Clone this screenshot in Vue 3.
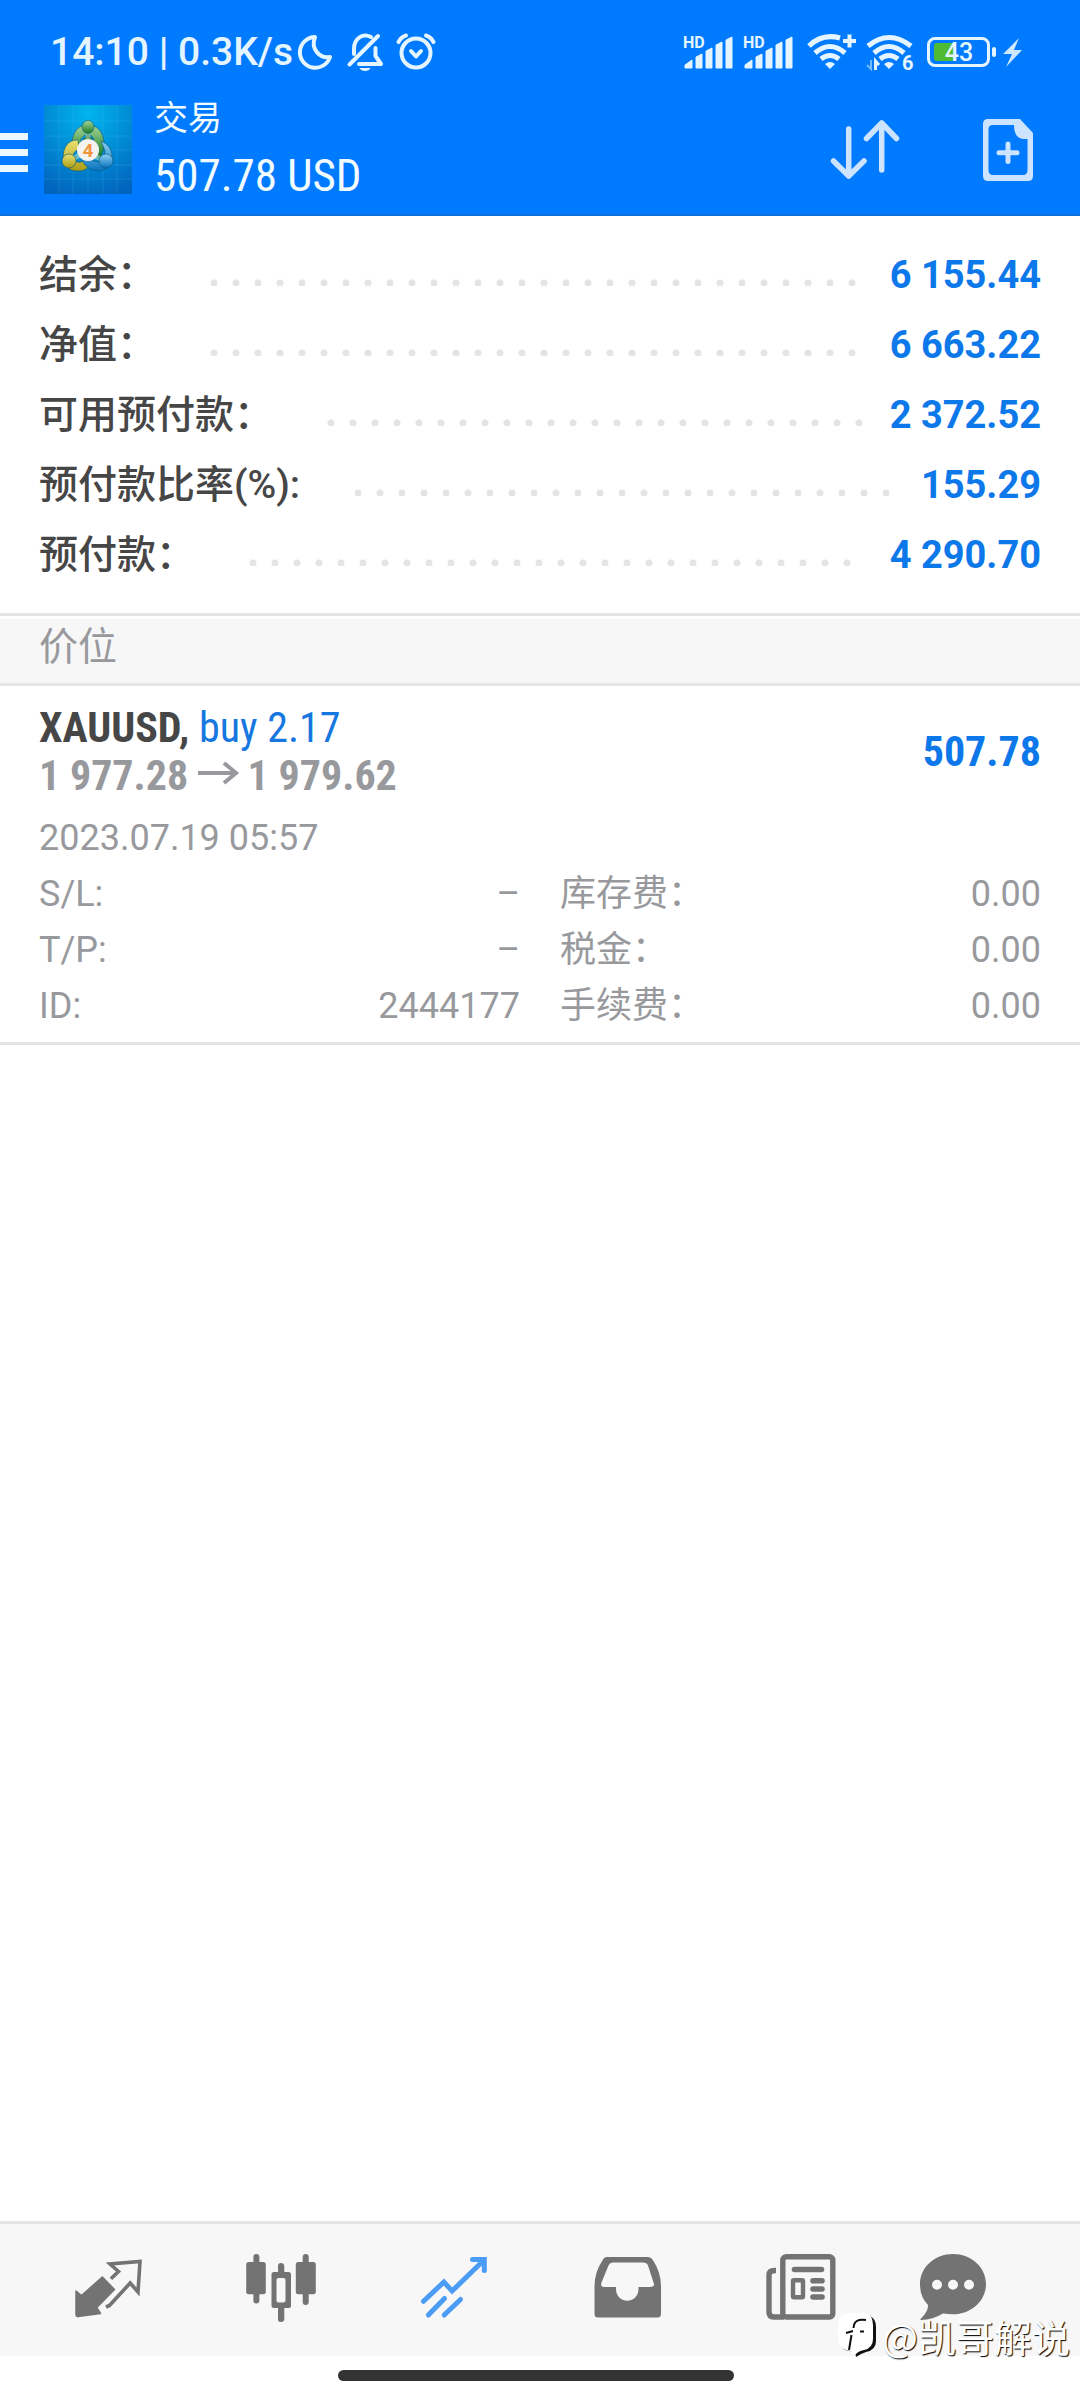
<script setup>
const account = [
  { label: '结余：', value: '6 155.44' },
  { label: '净值：', value: '6 663.22' },
  { label: '可用预付款：', value: '2 372.52' },
  { label: '预付款比率(%):', value: '155.29' },
  { label: '预付款：', value: '4 290.70' },
]

const details = [
  { label: 'S/L:', value: '–' },
  { label: '库存费：', value: '0.00' },
  { label: 'T/P:', value: '–' },
  { label: '税金：', value: '0.00' },
  { label: 'ID:', value: '2444177' },
  { label: '手续费：', value: '0.00' },
]
</script>

<template>
  <div class="screen">
    <header class="header">
      <div class="status">
        <span class="clock">14:10 | 0.3K/s</span>
        <svg class="moon" width="38" height="40" viewBox="0 0 38 40" fill="none" stroke="currentColor" stroke-width="4" stroke-linejoin="round">
          <path d="M19 5A15.400 15.400 0 1 0 34 25C25 27 14 18 19 5Z" />
        </svg>
        <svg class="bell" width="40" height="40" viewBox="0 0 40 40" fill="none" stroke="currentColor" stroke-width="4" stroke-linecap="round">
          <path d="M4.500 32.500 33 4M9 22V17C9 6 18 1 26 5" />
          <path d="M30.500 16V24L36 32H14" stroke-linejoin="round" />
          <path d="M14.500 36H25.500C24 40 16 40 14.500 36Z" fill="currentColor" stroke="none" />
        </svg>
        <svg class="alarm" width="42" height="40" viewBox="0 0 42 40" fill="none" stroke="currentColor" stroke-width="4" stroke-linecap="round" stroke-linejoin="round">
          <circle cx="21" cy="21" r="14.500" />
          <path d="M16 19 21 24.500 26 19M3.500 10Q6 5 11 3.500M38.500 10Q36 5 31 3.500" />
        </svg>
        <span class="spacer"></span>
        <svg v-for="n in 2" :key="n" class="signal" width="52" height="40" viewBox="0 0 52 40" fill="currentColor">
          <text x="0" y="16" class="hd">HD</text>
          <path d="M2 36V33L9 28V36ZM13 36V25L19 22V36ZM23 36V19L29 16V36ZM33 36V13L39 10V36ZM43 36V8L49 5V36Z" stroke="currentColor" stroke-width="1" stroke-linejoin="round" />
        </svg>
        <svg class="wifi" width="52" height="40" viewBox="0 0 52 40" fill="none" stroke="currentColor" stroke-width="5">
          <path d="M2 14Q15 1 33 6M8 21Q23 8 38 21M14 27Q23 20 32 27" />
          <path d="M18 32Q23 28 28 32L23 37Z" fill="currentColor" stroke="none" />
          <path d="M36 9H49M42.500 2.500V15.500" stroke-width="4" />
        </svg>
        <svg class="wifi" width="52" height="40" viewBox="0 0 52 40" fill="none" stroke="currentColor" stroke-width="5">
          <path d="M2 14Q23-3 45 14M8 21Q23 8 38 21M14 27Q23 20 32 27" />
          <path d="M18 32Q23 28 28 32L23 37Z" fill="currentColor" stroke="none" />
          <path d="M5 28V37L1 33" stroke-width="2" opacity=".5" />
          <path d="M9.500 38V29L13 33" stroke-width="3" />
          <text x="36" y="38" class="six">6</text>
        </svg>
        <svg class="battery" width="98" height="40" viewBox="0 0 98 40" fill="none">
          <rect x="1.500" y="6.500" width="60" height="27" rx="6.500" stroke="currentColor" stroke-width="3" />
          <path d="M10 11H27V29H10Q7 29 7 26V14Q7 11 10 11Z" fill="#4fbb32" />
          <rect x="65" y="15" width="4" height="10" rx="2" fill="currentColor" />
          <path d="M92 6 76 22H85L79 35 95 18H87Z" fill="#cfe8ff" />
          <text x="32" y="29" text-anchor="middle" class="charge">43</text>
        </svg>
      </div>

      <div class="appbar">
        <button class="menu" aria-label="菜单"><i></i><i></i><i></i></button>
        <svg class="logo" width="88" height="89" viewBox="0 0 88 89">
          <defs>
            <radialGradient id="sky" cx=".5" cy=".1" r=".95">
              <stop offset="0" stop-color="#00b4ee" /><stop offset="1" stop-color="#0164bd" />
            </radialGradient>
            <linearGradient id="green" x2="0" y2="1"><stop stop-color="#a8d89a" /><stop offset="1" stop-color="#177a25" /></linearGradient>
            <linearGradient id="yellow" x2="0" y2="1"><stop stop-color="#e9e173" /><stop offset="1" stop-color="#aa9c13" /></linearGradient>
            <linearGradient id="blue" x2="0" y2="1"><stop stop-color="#8dd1f4" /><stop offset="1" stop-color="#0872bc" /></linearGradient>
          </defs>
          <rect width="88" height="89" fill="url(#sky)" />
          <path d="M15 0V89M29 0V89M44 0V89M59 0V89M73 0V89M0 16H88M0 31H88M0 45H88M0 60H88M0 74H88" stroke="#56c3f2" stroke-opacity=".2" />
          <g stroke="#075676" stroke-opacity=".6">
            <path d="M28 42C26 12 61 13 60 40Q60 47 56 52L47 50 50 34Q44 24 37 34L36 42Z" fill="url(#green)" />
            <path d="M34 35C15 34 14 66 33 66Q44 67 48 56L42 52Q38 60 31 56 26 48 35 44Z" fill="url(#yellow)" />
            <path d="M57 36C74 43 70 65 54 66Q42 65 38 55L46 53Q52 60 60 54L61 46Z" fill="url(#blue)" />
            <path d="M38 36 44 29 50 36V50H38Z" fill="#1d6b34" />
            <path d="M25 56 36 50M62 56 50 51M44 23V34" stroke="#bfe3b4" stroke-width="5" stroke-opacity=".55" />
            <ellipse cx="44" cy="22" rx="6" ry="6.500" fill="url(#green)" />
            <circle cx="25" cy="56" r="7" fill="url(#yellow)" />
            <circle cx="62" cy="56" r="7" fill="url(#blue)" />
          </g>
          <circle cx="44" cy="45" r="11" fill="#f5f3f2" />
          <text x="44" y="52" text-anchor="middle" class="four">4</text>
        </svg>
        <div class="titles">
          <h1>交易</h1>
          <p class="amount">507.78 USD</p>
        </div>
        <button class="tool sort" aria-label="排序">
          <svg width="70" height="62" viewBox="0 0 70 62" fill="none" stroke="currentColor" stroke-width="5.500" stroke-linecap="round" stroke-linejoin="round">
            <path d="M18.700 10V57M3.500 42 18.700 57 34 42M51.700 51V4M36.500 19.500 51.700 4 66.500 19.500" />
          </svg>
        </button>
        <button class="tool" aria-label="新订单">
          <svg width="50" height="62" viewBox="0 0 50 62" fill="currentColor">
            <path fill-rule="evenodd" d="M5 0H37L50 14V57Q50 62 45 62H5Q0 62 0 57V5Q0 0 5 0ZM10 6Q5.500 6 5.500 10V51Q5.500 56 10 56H40Q44.500 56 44.500 51V20H40Q31 19 31 6Z" />
            <path d="M25 25V42.500M16 33.700H34" stroke="currentColor" stroke-width="5" stroke-linecap="round" />
          </svg>
        </button>
      </div>
    </header>

    <main>
      <dl class="account">
        <div v-for="row in account" :key="row.label" class="row">
          <dt>{{ row.label }}</dt>
          <span class="dots"></span>
          <dd>{{ row.value }}</dd>
        </div>
      </dl>

      <h2 class="section"><span>价位</span></h2>

      <article class="position">
        <div class="summary">
          <div>
            <p class="deal"><strong>XAUUSD,</strong> <span class="buy">buy 2.17</span></p>
            <p class="prices">
              1 977.28
              <svg class="arrow" width="40" height="22" viewBox="0 0 40 22" fill="none" stroke="currentColor" stroke-width="4"><path d="M0 11H38M26 1 38 11 26 21" /></svg>
              1 979.62
            </p>
          </div>
          <strong class="profit">507.78</strong>
        </div>
        <p class="date">2023.07.19 05:57</p>
        <dl class="details">
          <div v-for="item in details" :key="item.label">
            <dt>{{ item.label }}</dt>
            <dd>{{ item.value }}</dd>
          </div>
        </dl>
      </article>
    </main>

    <footer>
      <nav class="tabs">
        <a href="#quotes" aria-label="行情">
          <svg width="72" height="72" viewBox="0 0 72 72" fill="currentColor">
            <path d="M4 37 9.500 41.500 30.300 23 42.500 35.500 24.800 53.500 28.500 59.500 6 62.500Q4 63 4 60Z" stroke="currentColor" stroke-width="1.500" stroke-linejoin="round" />
            <path d="M38.900 24.700 46.500 17.500 38 10 68 7.500 66 38 58.200 29 37.500 51.500 34 53" fill="none" stroke="currentColor" stroke-width="3.600" />
          </svg>
        </a>
        <a href="#charts" aria-label="图表">
          <svg width="72" height="72" viewBox="0 0 72 72" fill="currentColor">
            <rect x="8.400" y="0" width="6" height="49.500" rx="3" /><rect x="1.200" y="8" width="19.600" height="32.300" rx="2.500" />
            <rect x="57.700" y="0" width="6" height="51" rx="3" /><rect x="50.800" y="8" width="20" height="32.300" rx="2.500" />
            <path d="M33 18V12Q33 9 36 9T39.300 12V18H43.500Q46 18 46 20.500V51.500Q46 54 43.500 54H39.300V65Q39.300 68 36 68T33 65V54H29Q26.500 54 26.500 51.500V20.500Q26.500 18 29 18ZM33.500 24Q31.500 24 31.500 26V46.500Q31.500 48.500 33.500 48.500H38.500Q40.500 48.500 40.500 46.500V26Q40.500 24 38.500 24Z" fill-rule="evenodd" />
          </svg>
        </a>
        <a href="#trade" class="active" aria-label="交易">
          <svg width="72" height="72" viewBox="0 0 72 72" fill="none" stroke="currentColor" stroke-width="5" stroke-linecap="round">
            <path d="M5.500 47.300 25.900 28 34.100 37 65 7M54.500 5.500H66.300V16.500" />
            <path d="M10.400 61 26.500 44.500M26.200 61 42.500 45.500" />
          </svg>
        </a>
        <a href="#history" aria-label="历史">
          <svg width="72" height="72" viewBox="0 0 72 72" fill="currentColor">
            <path fill-rule="evenodd" d="M15.500 3H57Q60 3 61.500 5.500Q70 18 70 32V60Q70 63.500 66.500 63.500H7Q3.500 63.500 3.500 60V32Q3.500 18 12 5.500Q13 3 15.500 3ZM22 8.500Q19 8.500 17.500 11.500L10.500 28.500Q9 33 13 33H25V35C25 50.500 47.500 50.500 47.500 35V33H59Q64.500 33 62.500 28.500L57 11.500Q56 8.500 52 8.500Z" />
          </svg>
        </a>
        <a href="#news" aria-label="新闻">
          <svg width="72" height="72" viewBox="0 0 72 72" fill="none" stroke="currentColor">
            <rect x="18.800" y="2.700" width="50" height="60.300" rx="3.500" stroke-width="5.400" />
            <path d="M12 16.500H10.500Q5 16.500 5 21V58Q5 63 10 63H20" stroke-width="5.400" />
            <path d="M30.500 15.500H57.500M49 26.800H58M49 35H58M49 43H58" stroke-width="5.600" stroke-linecap="round" />
            <rect x="29" y="26.300" width="10" height="17" rx="1" stroke-width="4.400" />
          </svg>
        </a>
        <a href="#chat" aria-label="聊天">
          <svg width="72" height="72" viewBox="0 0 72 72" fill="currentColor">
            <path fill-rule="evenodd" d="M36 0C54 0 69 13 69 30S54 60.300 36 60.300Q31 60.300 26 59.500Q16 65.500 4 66Q2.500 66 4 64.500Q11.500 57 11 51Q3 43 3 30C3 13 18 0 36 0ZM20 25.700A5 5 0 1 0 20 35.700A5 5 0 1 0 20 25.700ZM36 25.700A5 5 0 1 0 36 35.700A5 5 0 1 0 36 25.700ZM52 25.700A5 5 0 1 0 52 35.700A5 5 0 1 0 52 25.700Z" />
          </svg>
        </a>
      </nav>
      <div class="gesture"><i></i></div>
    </footer>

    <div class="watermark">
      <svg width="40" height="46" viewBox="0 0 40 46">
        <path d="M13 2H27Q38 3 38 14V28Q38 37 28 39Q22 41 18 44L17 39L11 38Q4 37 2 31Z" fill="#111" />
        <path d="M11 0H25Q35 1 35 12V26Q35 35 26 37Q20 38 17 42L12 38Q0 36 0 26V11Q1 1 11 0Z" fill="#fff" />
        <path d="M28 7Q16 5 15.500 15M8 20 15 18M22 18.500H26M13.500 22 11 37" fill="none" stroke="#111" stroke-width="2" />
      </svg>
      <span>@凯哥解说</span>
    </div>
  </div>
</template>

<style>
body {
  margin: 0;
}
</style>

<style scoped>
.screen {
  position: relative;
  display: flex;
  flex-direction: column;
  min-height: 100vh;
  background: #fff;
  color: #98999d;
  font-family: Roboto, "Noto Sans CJK SC", sans-serif;
}

h1, h2, p, dl, dd {
  margin: 0;
}

svg {
  display: block;
  flex: none;
  overflow: visible;
}

button {
  padding: 0;
  border: 0;
  background: none;
  color: inherit;
}

.header {
  background: #007aff;
  color: #e4f5ff;
  border-bottom: 2px solid #0b70d9;
}

.status {
  display: flex;
  align-items: center;
  height: 96px;
  padding: 4px 55px 0 50px;
}

.clock {
  font-size: 39px;
  font-weight: 500;
  line-height: 40px;
  white-space: nowrap;
}

.moon { margin-left: 3px; }
.bell { margin-left: 11px; }
.alarm { margin-left: 10px; }
.spacer { flex: 1; }
.signal { margin-right: 8px; }
.wifi { margin: 0 1px 0 4px; }
.wifi + .wifi { margin: 0 9px 0 6px; }

.hd { font-size: 16px; font-weight: 700; }
.six { font-size: 20px; font-weight: 700; fill: currentColor; stroke: none; }
.charge { font-size: 25px; font-weight: 500; fill: currentColor; }
.four { font-size: 19px; font-weight: 700; fill: #f1953f; }

.appbar {
  display: flex;
  align-items: center;
  height: 114px;
  padding-right: 47px;
}

.menu {
  display: grid;
  gap: 9px;
  width: 28px;
  margin: 0 16px 10px 0;
}

.menu i {
  height: 7px;
  background: #ebf8ff;
}

.logo {
  margin-bottom: 16px;
}

.titles {
  flex: 1;
  align-self: flex-start;
  margin-left: 22px;
  color: #f2fcff;
}

h1 {
  font-size: 34px;
  font-weight: 400;
  line-height: 36px;
}

.amount, .deal, .prices, .profit {
  font-family: "Roboto Condensed", "Liberation Sans Narrow", Roboto, sans-serif;
}

.amount {
  margin-top: 12px;
  font-size: 45px;
  line-height: 56px;
}

.tool {
  margin-bottom: 15px;
  color: #cce4ff;
}

.sort {
  margin-right: 83px;
}

.account {
  padding: 24px 39px 23px;
  border-bottom: 3px solid #e4e4e4;
}

.row {
  display: flex;
  align-items: center;
  height: 70px;
  font-size: 39px;
  line-height: 70px;
  white-space: nowrap;
}

.row dt {
  color: #464646;
  font-weight: 500;
}

.row dd {
  color: #0d78ea;
  font-size: 38px;
  font-weight: 700;
}

.dots {
  flex: 1;
  height: 7px;
  margin: 14px 25px 0 54px;
  background: radial-gradient(circle at 4px 4px, #e4e4e4 3px, transparent 4px) 0 0 / 22px 7px repeat-x;
}

.section {
  margin-top: 3px;
  padding: 0 39px;
  background: #f7f7f7;
  border-bottom: 3px solid #e4e4e4;
  font-size: 39px;
  font-weight: 400;
  line-height: 56px;
}

.section span {
  display: block;
  padding-bottom: 8px;
}

.position {
  padding: 18px 39px 8px;
  border-bottom: 3px solid #e4e4e4;
}

.summary {
  display: flex;
  align-items: center;
  justify-content: space-between;
  font-size: 42px;
  line-height: 48px;
}

.deal strong {
  color: #464646;
}

.buy {
  color: #1777e0;
}

.prices {
  font-weight: 700;
}

.arrow {
  display: inline-block;
  vertical-align: 6px;
}

.profit {
  color: #0d78ea;
}

.date {
  margin-top: 10px;
}

.date, .details {
  font-size: 36px;
  line-height: 56px;
}

.details {
  display: grid;
  grid-template-columns: 1fr 1fr;
  column-gap: 40px;
}

.details div {
  display: flex;
  justify-content: space-between;
}

footer {
  margin-top: auto;
}

.tabs {
  display: grid;
  grid-template-columns: repeat(5, 173fr) 133fr;
  place-items: center;
  height: 132px;
  padding: 0 61px 0 21px;
  background: #f7f7f7;
  border-top: 3px solid #e4e4e4;
}

.tabs a {
  color: #737373;
}

.tabs .active {
  color: #4a9cf5;
}

.gesture {
  display: flex;
  justify-content: center;
  height: 30px;
  padding: 14px 8px 0 0;
}

.gesture i {
  width: 37%;
  height: 11px;
  border-radius: 6px;
  background: #333;
}

.watermark {
  position: absolute;
  right: 10px;
  bottom: 36px;
  display: flex;
  align-items: center;
  gap: 4px;
  color: #fff;
  font-family: "Noto Sans CJK SC", sans-serif;
  font-size: 38px;
  line-height: 56px;
  text-shadow: 1px 1px 1px #000;
}
</style>
